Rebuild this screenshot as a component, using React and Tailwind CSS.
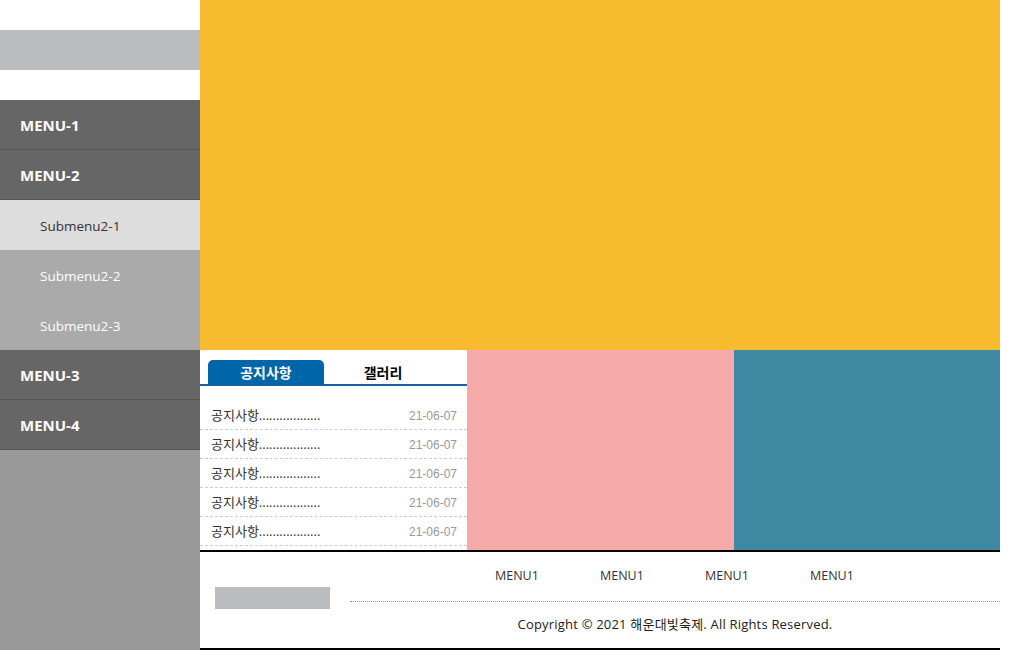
const font = { fontFamily: '"Open Sans", "Noto Sans CJK KR", sans-serif' };

const notices = Array.from({ length: 5 }, () => ({ title: '공지사항..................', date: '21-06-07' }));

export default function App() {
  return (
    <div className="w-[1000px] h-[650px] flex text-[#333]" style={font}>
      <aside className="w-[200px] flex flex-col bg-[#999999]">
        <div className="h-[100px] bg-white pt-[30px]">
          <div className="h-[40px] bg-[#bbbcbe]" />
        </div>
        <nav>
          <a className="h-[50px] flex items-center pl-5 pt-[2px] bg-[#666666] border-b border-[#555555] text-white font-bold text-[15px]">MENU-1</a>
          <a className="h-[50px] flex items-center pl-5 pt-[2px] bg-[#666666] border-b border-[#555555] text-white font-bold text-[15px]">MENU-2</a>
          <a className="h-[50px] flex items-center pl-10 pt-[3px] bg-[#dddddd] text-[#333] text-[13.5px]">Submenu2-1</a>
          <a className="h-[50px] flex items-center pl-10 pt-[3px] bg-[#aaaaaa] text-white text-[13.5px]">Submenu2-2</a>
          <a className="h-[50px] flex items-center pl-10 pt-[3px] bg-[#aaaaaa] text-white text-[13.5px]">Submenu2-3</a>
          <a className="h-[50px] flex items-center pl-5 pt-[2px] bg-[#666666] border-b border-[#555555] text-white font-bold text-[15px]">MENU-3</a>
          <a className="h-[50px] flex items-center pl-5 pt-[2px] bg-[#666666] border-b border-[#555555] text-white font-bold text-[15px]">MENU-4</a>
        </nav>
      </aside>
      <main className="flex-1 flex flex-col">
        <div className="h-[350px] bg-[#f9bb2f]" />
        <div className="h-[200px] flex">
          <section className="w-[267px] bg-white">
            <div className="h-[36px] pt-[10px] pl-2 flex border-b-2 border-[#1b5f9e]">
              <div className="w-[116px] h-[25px] rounded-t-[5px] bg-[#0066aa] text-white font-bold text-[14px] flex items-center justify-center">공지사항</div>
              <div className="w-[118px] h-[25px] text-black font-bold text-[14px] flex items-center justify-center">갤러리</div>
            </div>
            <ul className="pt-[15px] px-0">
              {notices.map((n, i) => (
                <li key={i} className="h-[29px] flex items-center justify-between pt-[2px] pl-[11px] pr-[10px] border-b border-dashed border-[#cccccc]">
                  <span className="text-[13px] text-[#333]">{n.title}</span>
                  <span className="text-[12px] text-[#999999]" style={{ fontFamily: '"Liberation Sans", sans-serif' }}>{n.date}</span>
                </li>
              ))}
            </ul>
          </section>
          <div className="w-[267px] bg-[#f5a9a9]" />
          <div className="flex-1 bg-[#3e88a1]" />
        </div>
        <footer className="h-[100px] border-y-2 border-black flex bg-white">
          <div className="w-[150px] pl-[15px] pt-[35px]">
            <div className="w-[115px] h-[22px] bg-[#bbbcbe]" />
          </div>
          <div className="flex-1 flex flex-col">
            <ul className="h-[50px] flex items-center pl-[145px] border-b border-dotted border-[#999999]">
              {['MENU1', 'MENU1', 'MENU1', 'MENU1'].map((m, i) => (
                <li key={i} className="w-[105px] text-[12.5px] text-[#333]">{m}</li>
              ))}
            </ul>
            <p className="flex-1 flex items-center justify-center text-[13px] text-[#222] tracking-[0.2px]">
              Copyright © 2021 해운대빛축제. All Rights Reserved.
            </p>
          </div>
        </footer>
      </main>
    </div>
  );
}
